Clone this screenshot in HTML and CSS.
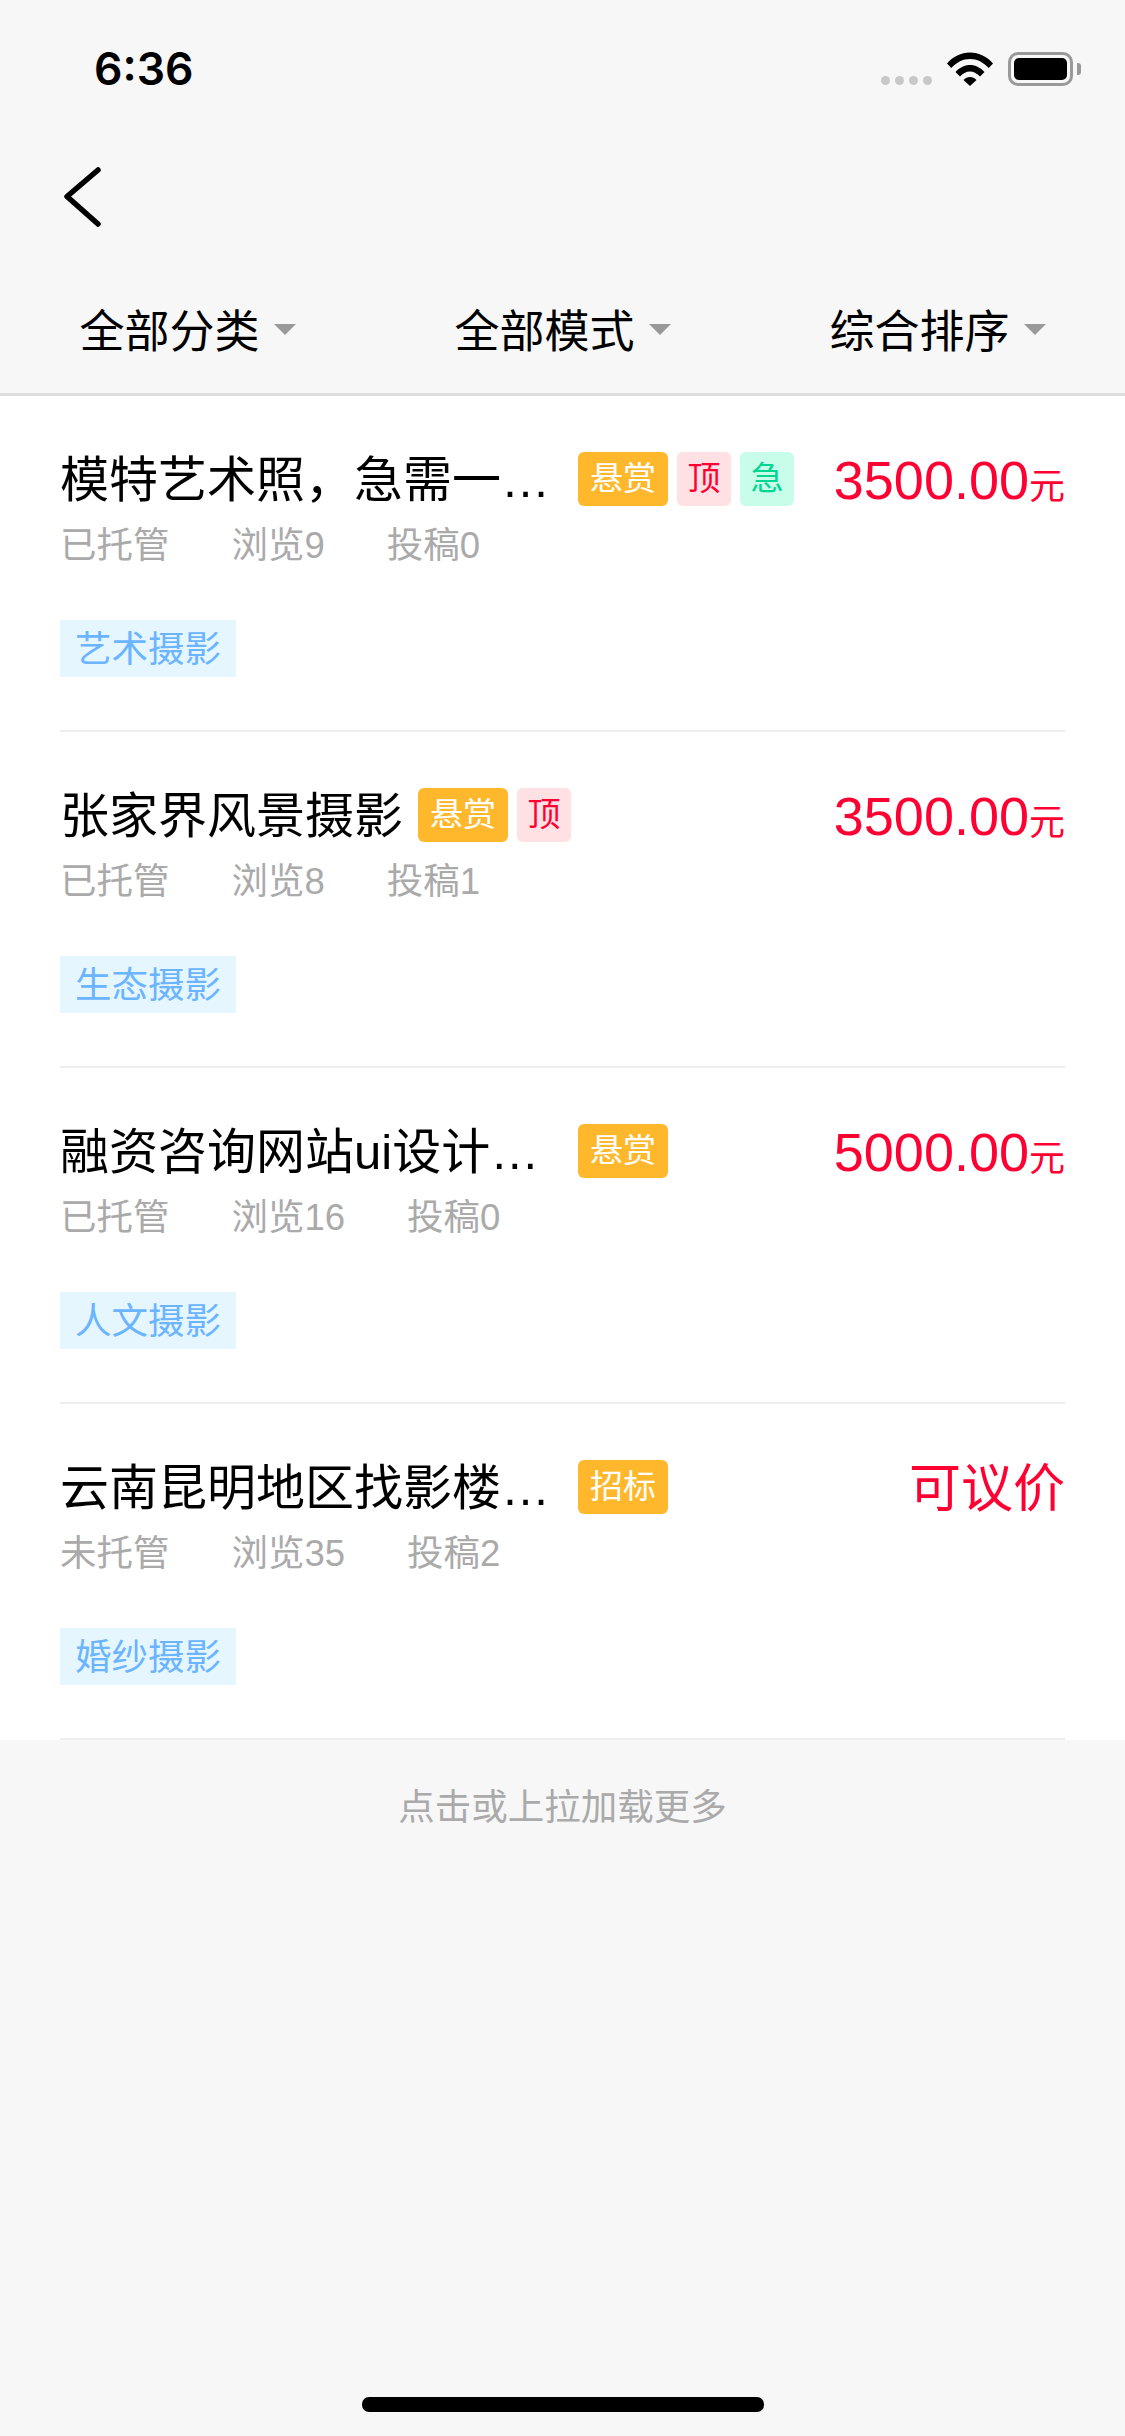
FILE: index.html
```html
<!DOCTYPE html>
<html lang="zh-CN">
<head>
    <meta charset="UTF-8">
    <meta name="viewport" content="width=device-width, initial-scale=1.0">
    <title>需求列表</title>
    <link rel="stylesheet" href="styles.css">
</head>
<body>
    <div class="page">
        <div class="status-bar">
            <span class="time">6:36</span>
            <div class="status-icons">
                <div class="signal"><i></i><i></i><i></i><i></i></div>
                <svg class="wifi" width="46" height="34" viewBox="0 0 46 34">
                    <path d="M0 11.500C6 4.500 14 .5 23 .5s17 4 23 11l-4.300 4.500C36.500 10.300 30 7 23 7S9.500 10.300 4.300 16z"/>
                    <path d="M8.500 20C12.300 15.700 17.500 13 23 13s10.700 2.700 14.500 7l-4.500 4.500C30.300 21.500 26.800 19.500 23 19.500s-7.300 2-10 5z"/>
                    <path d="M16.500 28c1.700-1.900 4-3 6.500-3s4.800 1.100 6.500 3L23 34z"/>
                </svg>
                <div class="battery"><div class="battery-level"></div></div>
                <div class="battery-cap"></div>
            </div>
        </div>

        <div class="nav-bar">
            <svg class="back" width="40" height="62" viewBox="0 0 40 62">
                <path d="M35 4 4 30.500 35 58" fill="none" stroke="#000" stroke-width="5.500" stroke-linecap="round" stroke-linejoin="round"/>
            </svg>
        </div>

        <div class="filter-bar">
            <div class="filter-item">全部分类<span class="arrow"></span></div>
            <div class="filter-item">全部模式<span class="arrow"></span></div>
            <div class="filter-item">综合排序<span class="arrow"></span></div>
        </div>

        <div class="task-list">
            <div class="task">
                <div class="task-head">
                    <div class="task-title task-title-long">模特艺术照，急需一…</div>
                    <span class="badge badge-orange">悬赏</span>
                    <span class="badge badge-red">顶</span>
                    <span class="badge badge-green">急</span>
                    <div class="price">3500.00<small>元</small></div>
                </div>
                <div class="meta"><span>已托管</span><span>浏览9</span><span>投稿0</span></div>
                <span class="tag">艺术摄影</span>
            </div>

            <div class="task">
                <div class="task-head">
                    <div class="task-title">张家界风景摄影</div>
                    <span class="badge badge-orange">悬赏</span>
                    <span class="badge badge-red">顶</span>
                    <div class="price">3500.00<small>元</small></div>
                </div>
                <div class="meta"><span>已托管</span><span>浏览8</span><span>投稿1</span></div>
                <span class="tag">生态摄影</span>
            </div>

            <div class="task">
                <div class="task-head">
                    <div class="task-title task-title-long">融资咨询网站ui设计…</div>
                    <span class="badge badge-orange">悬赏</span>
                    <div class="price">5000.00<small>元</small></div>
                </div>
                <div class="meta"><span>已托管</span><span>浏览16</span><span>投稿0</span></div>
                <span class="tag">人文摄影</span>
            </div>

            <div class="task">
                <div class="task-head">
                    <div class="task-title task-title-long">云南昆明地区找影楼…</div>
                    <span class="badge badge-orange">招标</span>
                    <div class="price price-text">可议价</div>
                </div>
                <div class="meta"><span>未托管</span><span>浏览35</span><span>投稿2</span></div>
                <span class="tag">婚纱摄影</span>
            </div>
        </div>

        <div class="load-more">点击或上拉加载更多</div>
        <div class="home-indicator"></div>
    </div>
</body>
</html>
```

FILE: styles.css
```css
* {
    box-sizing: border-box;
}
body {
    margin: 0;
    background-color: #f7f7f7;
    font-family: "Liberation Sans", "Noto Sans CJK SC", sans-serif;
    color: #000;
}
.page {
    display: flex;
    flex-direction: column;
    height: 2436px;
    overflow: hidden;
}
.status-bar {
    height: 132px;
    padding: 47px 44px 0 94px;
    display: flex;
    justify-content: space-between;
    align-items: flex-start;
}
.time {
    font-family: "Inter", sans-serif;
    font-size: 44.500px;
    font-weight: 600;
    line-height: 44px;
}
.status-icons {
    display: flex;
    align-items: flex-start;
    margin-top: 5px;
}
.signal {
    display: flex;
    gap: 5px;
    margin: 24px 15px 0 0;
}
.signal i {
    width: 9px;
    height: 9px;
    border-radius: 50%;
    background-color: #c8c8c8;
}
.wifi {
    margin-right: 15px;
}
.battery {
    width: 65px;
    height: 34px;
    padding: 3px;
    border: 3px solid #999;
    border-radius: 10px;
}
.battery-level {
    height: 100%;
    background-color: #000;
    border-radius: 5px;
}
.battery-cap {
    width: 4px;
    height: 12px;
    margin: 11px 0 0 4px;
    background-color: #999;
    border-radius: 0 3px 3px 0;
}
.nav-bar {
    height: 134px;
    padding: 34px 0 0 63px;
}
.back {
    display: block;
}
.filter-bar {
    height: 130px;
    display: grid;
    grid-template-columns: repeat(3, 1fr);
    border-bottom: 3px solid #ddd;
    padding-bottom: 3px;
}
.filter-item {
    display: flex;
    justify-content: center;
    align-items: center;
    gap: 14px;
    font-size: 45px;
}
.arrow {
    width: 0;
    height: 0;
    border-left: 11px solid transparent;
    border-right: 11px solid transparent;
    border-top: 11px solid #999;
    margin-top: 2px;
}
.task-list {
    background-color: #fff;
    padding: 0 60px;
}
.task {
    height: 336px;
    padding-top: 56px;
    border-bottom: 2px solid #eee;
}
.task-head {
    display: flex;
    align-items: center;
    height: 54px;
}
.task-title {
    margin-right: 15px;
    padding-top: 1px;
    font-size: 49px;
    line-height: 54px;
    white-space: nowrap;
}
.task-title-long {
    width: 503px;
}
.badge {
    width: 54px;
    height: 54px;
    margin-right: 9px;
    border-radius: 6px;
    font-size: 33px;
    line-height: 54px;
    text-align: center;
}
.badge-orange {
    width: 90px;
    background-color: #ffb82b;
    color: #fff;
}
.badge-red {
    background-color: #ffe0e3;
    color: #ff0033;
}
.badge-green {
    background-color: #c8fdea;
    color: #00d690;
}
.price {
    margin-left: auto;
    padding-top: 1px;
    font-size: 54px;
    color: #ff0033;
    white-space: nowrap;
}
.price small {
    font-size: 36px;
}
.price-text {
    padding-top: 0;
    margin-top: -6px;
    font-size: 52px;
}
.meta {
    display: flex;
    gap: 62px;
    margin-top: 15px;
    font-size: 36.500px;
    line-height: 50px;
    color: #aaa;
}
.tag {
    display: inline-block;
    margin-top: 49px;
    padding: 1px 15px 0;
    height: 57px;
    background-color: #e5f6ff;
    color: #6bb4ff;
    font-size: 36.500px;
    line-height: 57px;
}
.load-more {
    margin-top: 46px;
    font-size: 36.500px;
    line-height: 44px;
    text-align: center;
    color: #aaa;
}
.home-indicator {
    width: 402px;
    height: 15px;
    margin: auto auto 24px;
    background-color: #000;
    border-radius: 7px;
}
```
